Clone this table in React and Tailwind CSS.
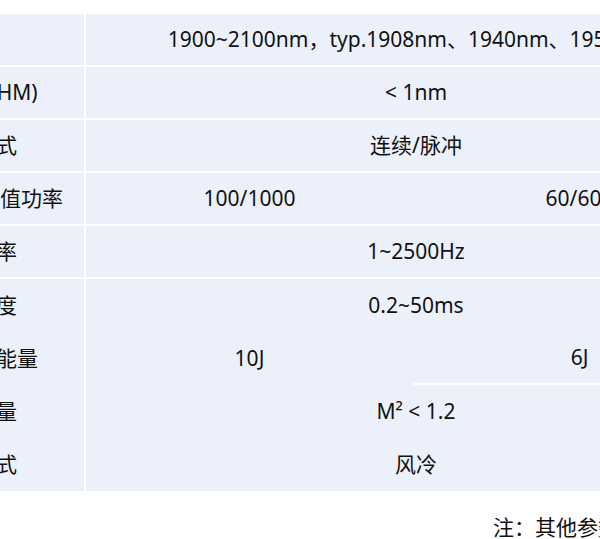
const cell = "bg-[#ebf0fa] flex items-center justify-center whitespace-nowrap";

const Row = ({ label, children }) => (
  <div className="flex gap-[2px] h-[51px]">
    <div className={`${cell} w-[218px] shrink-0`}>{label}</div>
    <div className="flex-1 flex">{children}</div>
  </div>
);

const Full = ({ text, className = "" }) => (
  <div className={`${cell} flex-1 ${className}`}>{text}</div>
);

export default function App() {
  return (
    <div
      className="min-h-screen w-full overflow-hidden bg-white pt-[14px] text-[21px] text-[#111]"
      style={{ fontFamily: '"Noto Sans", "Noto Sans CJK SC", sans-serif' }}
    >
      <div className="ml-[-134px] w-[880px] flex flex-col gap-[2px]">
        <Row label="波长">
          <Full className="pr-[14px]" text="1900~2100nm，typ.1908nm、1940nm、1950nm" />
        </Row>
        <Row label="线宽 (FWHM)">
          <Full text="< 1nm" />
        </Row>
        <Row label="工作方式">
          <Full text="连续/脉冲" />
        </Row>
        <Row label="平均功率/峰值功率">
          <div className={`${cell} w-[327px]`}>100/1000</div>
          <div className={`${cell} flex-1`}>60/600</div>
        </Row>
        <Row label="重复频率">
          <Full text="1~2500Hz" />
        </Row>

        {/* merged block, no row lines */}
        <div className="flex gap-[2px]">
          <div className="w-[218px] shrink-0 flex flex-col">
            {["脉冲宽度", "最大脉冲能量", "光束质量", "冷却方式"].map((l) => (
              <div key={l} className={`${cell} h-[53px]`}>
                {l}
              </div>
            ))}
          </div>
          <div className="flex-1 flex flex-col">
            <div className={`${cell} h-[53px]`}>0.2~50ms</div>
            <div className="h-[53px] flex">
              <div className={`${cell} w-[327px]`}>10J</div>
              <div className={`${cell} flex-1 border-b-2 border-white`}>6J</div>
            </div>
            <div className={`${cell} h-[53px]`}>M² &lt; 1.2</div>
            <div className={`${cell} h-[53px]`}>风冷</div>
          </div>
        </div>
      </div>

      <div className="mt-[22px] pl-[493px] leading-[28px] whitespace-nowrap">
        注：其他参数可定制
      </div>
    </div>
  );
}
